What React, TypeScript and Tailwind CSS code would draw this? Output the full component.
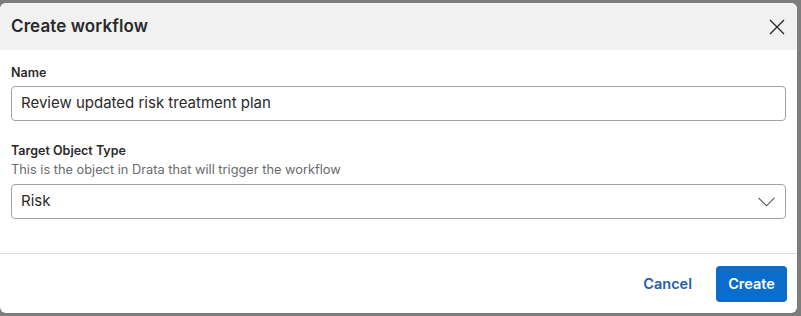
export default function App() {
  return (
    <div className="w-[801px] h-[316px] bg-[#7d7d7d] pt-[3px] pr-[4px] font-['Inter',sans-serif]">
      <div className="w-[797px] h-[310px] bg-white rounded-[6px] overflow-hidden flex flex-col">
        {/* Header */}
        <div className="h-[47px] shrink-0 bg-[#f1f1f1] flex items-center justify-between pl-[11px] pr-[12px]">
          <h2 className="text-[17px] font-semibold text-[#2a2a2a] tracking-[0.1px]">Create workflow</h2>
          <svg width="16" height="16" viewBox="0 0 16 16" className="text-[#222]">
            <path d="M1 1 L15 15 M15 1 L1 15" stroke="currentColor" strokeWidth="1.2" fill="none" />
          </svg>
        </div>

        {/* Body */}
        <div className="px-[11px] pt-[15px] h-[203px] shrink-0">
          <label className="block text-[12.5px] font-semibold text-[#2a2a2a] leading-[16px]">Name</label>
          <div className="mt-[5px] h-[35px] border border-[#a3a3a3] rounded-[4px] flex items-center px-[9px] text-[15px] text-[#2a2a2a]">
            Review updated risk treatment plan
          </div>

          <label className="block mt-[22px] text-[12.5px] font-semibold text-[#2a2a2a] leading-[16px]">Target Object Type</label>
          <p className="mt-[3px] text-[12.8px] text-[#6b6b6b] leading-[16px]">This is the object in Drata that will trigger the workflow</p>
          <div className="mt-[6px] h-[35px] border border-[#a3a3a3] rounded-[4px] flex items-center justify-between pl-[9px] pr-[10px] text-[15px] text-[#2a2a2a]">
            <span>Risk</span>
            <svg width="17" height="10" viewBox="0 0 17 10" className="text-[#555]">
              <path d="M0.5 0.8 L8.5 8.8 L16.5 0.8" stroke="currentColor" strokeWidth="1.1" fill="none" />
            </svg>
          </div>
        </div>

        {/* Footer */}
        <div className="border-t border-[#dcdcdc] flex-1 flex items-center justify-end pr-[10px] gap-[24px]">
          <button className="text-[14.5px] font-semibold text-[#1f5ea8]">Cancel</button>
          <button className="h-[36px] w-[71px] rounded-[4px] bg-[#0a6ccb] text-white text-[14.5px] font-semibold">Create</button>
        </div>
      </div>
    </div>
  )
}
